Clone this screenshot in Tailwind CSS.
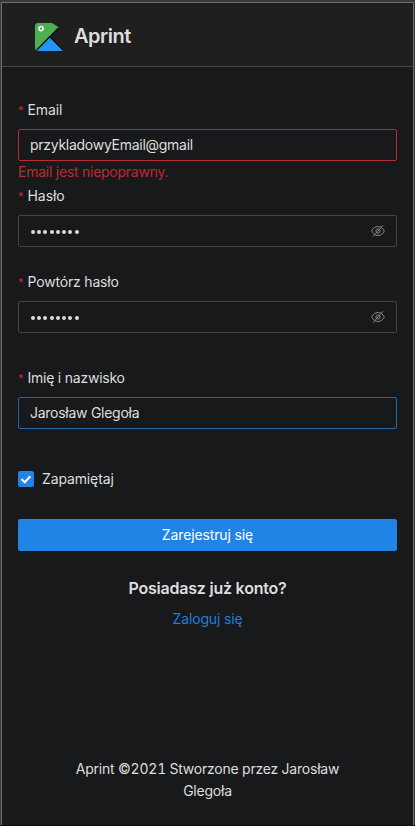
<!DOCTYPE html>
<html lang="pl">
<head>
<meta charset="utf-8">
<title>Aprint</title>
<script src="https://cdn.jsdelivr.net/npm/@tailwindcss/browser@4"></script>
</head>
<body class="h-[826px] overflow-hidden bg-[#3a3a3a] pt-[2px] pl-px pr-px font-['Inter','Liberation_Sans',sans-serif] text-sm leading-[22px] text-[#dedede]">
<div class="flex h-[823px] flex-col border border-b-0 border-[#6e6e6e] bg-[#18191b]">
  <header class="flex h-16 shrink-0 items-center border-b border-[#484848] bg-[#1f1f1f] pl-[32.5px]">
    <svg class="mt-[5px] h-7 w-7 shrink-0" viewBox="0 0 28 28">
      <path d="M3 0H17L24 4.5L1 28Q0 27 0 25V3Q0 0 3 0Z" fill="#4caf50"/>
      <path d="M23.5 5L14.8 14L28.4 27.5" fill="none" stroke="#080a0c" stroke-width="1.5"/>
      <path d="M14.8 13.8L1 28" stroke="#080a0c" stroke-width="1.6"/>
      <path d="M14.8 14.7L28 28H1.7Z" fill="#2196f3"/>
      <circle cx="6" cy="5.6" r="2.1" fill="#4caf50" stroke="#fff" stroke-width="1.4"/>
    </svg>
    <h1 class="mt-0.5 ml-[11.5px] text-xl font-semibold tracking-[-0.5px]">Aprint</h1>
  </header>
  <main class="flex flex-col px-4">
    <label class="mt-8 flex h-[22px] items-center"><span class="mr-1 w-[5.5px] pb-px text-[11px] leading-[20px] text-[#c42b30]">*</span><span class="tracking-[-0.1px]">Email</span></label>
    <div class="mt-2 flex h-8 items-center rounded-xs border border-[#b92c30] px-[11px] tracking-[-0.27px]">przykladowyEmail@gmail</div>
    <div class="flex h-6 items-center pb-0.5 tracking-[-0.25px] text-[#b92c30]">Email jest niepoprawny.</div>
    <label class="flex h-[22px] items-center"><span class="mr-1 w-[5.5px] pb-px text-[11px] leading-[20px] text-[#c42b30]">*</span><span class="tracking-[-0.05px]">Hasło</span></label>
    <div class="mt-2 flex h-8 items-center justify-between rounded-xs border border-[#434343] px-[11px]">
      <span class="flex gap-[2.3px] pt-px pl-[0.7px]"><i class="size-1 rounded-full bg-[#dcdcdc]"></i><i class="size-1 rounded-full bg-[#dcdcdc]"></i><i class="size-1 rounded-full bg-[#dcdcdc]"></i><i class="size-1 rounded-full bg-[#dcdcdc]"></i><i class="size-1 rounded-full bg-[#dcdcdc]"></i><i class="size-1 rounded-full bg-[#dcdcdc]"></i><i class="size-1 rounded-full bg-[#dcdcdc]"></i><i class="size-1 rounded-full bg-[#dcdcdc]"></i></span>
      <svg class="size-3.5" viewBox="0 0 14 14" fill="none" stroke="#858585"><path d="M.7 7C2 4.2 4.2 2.5 7 2.5S12 4.2 13.3 7C12 9.8 9.8 11.5 7 11.5S2 9.8.7 7Z"/><circle cx="7" cy="7" r="2.1"/><path d="M12 1.3L2 12.6"/></svg>
    </div>
    <label class="mt-6 flex h-[22px] items-center"><span class="mr-1 w-[5.5px] pb-px text-[11px] leading-[20px] text-[#c42b30]">*</span><span class="tracking-[-0.18px]">Powtórz hasło</span></label>
    <div class="mt-2 flex h-8 items-center justify-between rounded-xs border border-[#434343] px-[11px]">
      <span class="flex gap-[2.3px] pt-px pl-[0.7px]"><i class="size-1 rounded-full bg-[#dcdcdc]"></i><i class="size-1 rounded-full bg-[#dcdcdc]"></i><i class="size-1 rounded-full bg-[#dcdcdc]"></i><i class="size-1 rounded-full bg-[#dcdcdc]"></i><i class="size-1 rounded-full bg-[#dcdcdc]"></i><i class="size-1 rounded-full bg-[#dcdcdc]"></i><i class="size-1 rounded-full bg-[#dcdcdc]"></i><i class="size-1 rounded-full bg-[#dcdcdc]"></i></span>
      <svg class="size-3.5" viewBox="0 0 14 14" fill="none" stroke="#858585"><path d="M.7 7C2 4.2 4.2 2.5 7 2.5S12 4.2 13.3 7C12 9.8 9.8 11.5 7 11.5S2 9.8.7 7Z"/><circle cx="7" cy="7" r="2.1"/><path d="M12 1.3L2 12.6"/></svg>
    </div>
    <label class="mt-[34px] flex h-[22px] items-center"><span class="mr-1 w-[5.5px] pb-px text-[11px] leading-[20px] text-[#c42b30]">*</span><span class="tracking-[-0.23px]">Imię i nazwisko</span></label>
    <div class="mt-2 flex h-8 items-center rounded-xs border border-[#2468ac] px-[11px] tracking-[-0.27px]">Jarosław Glegoła</div>
    <label class="mt-[39px] flex h-[22px] items-center gap-2">
      <span class="flex size-4 items-center justify-center rounded-xs bg-[#1f84e5]"><svg class="size-4" viewBox="0 0 16 16" fill="none" stroke="#fff" stroke-width="2"><path d="M3.4 8L6.8 11.3L12.3 5.3"/></svg></span>
      <span class="tracking-[-0.13px]">Zapamiętaj</span>
    </label>
    <button class="mt-[29px] h-8 rounded-xs bg-[#1f84e5] tracking-[-0.13px] text-white">Zarejestruj się</button>
    <h2 class="mt-[25px] text-center text-base leading-6 font-semibold tracking-[-0.22px]">Posiadasz już konto?</h2>
    <a class="mt-2 text-center tracking-[-0.15px] text-[#1f7fdc]">Zaloguj się</a>
  </main>
  <footer class="mt-auto px-[50px] pb-[23px] text-center tracking-[-0.22px] tabular-nums">Aprint ©2021 Stworzone przez Jarosław Glegoła</footer>
</div>
<div class="-mx-px h-px bg-[#150d12]"></div>
</body>
</html>
